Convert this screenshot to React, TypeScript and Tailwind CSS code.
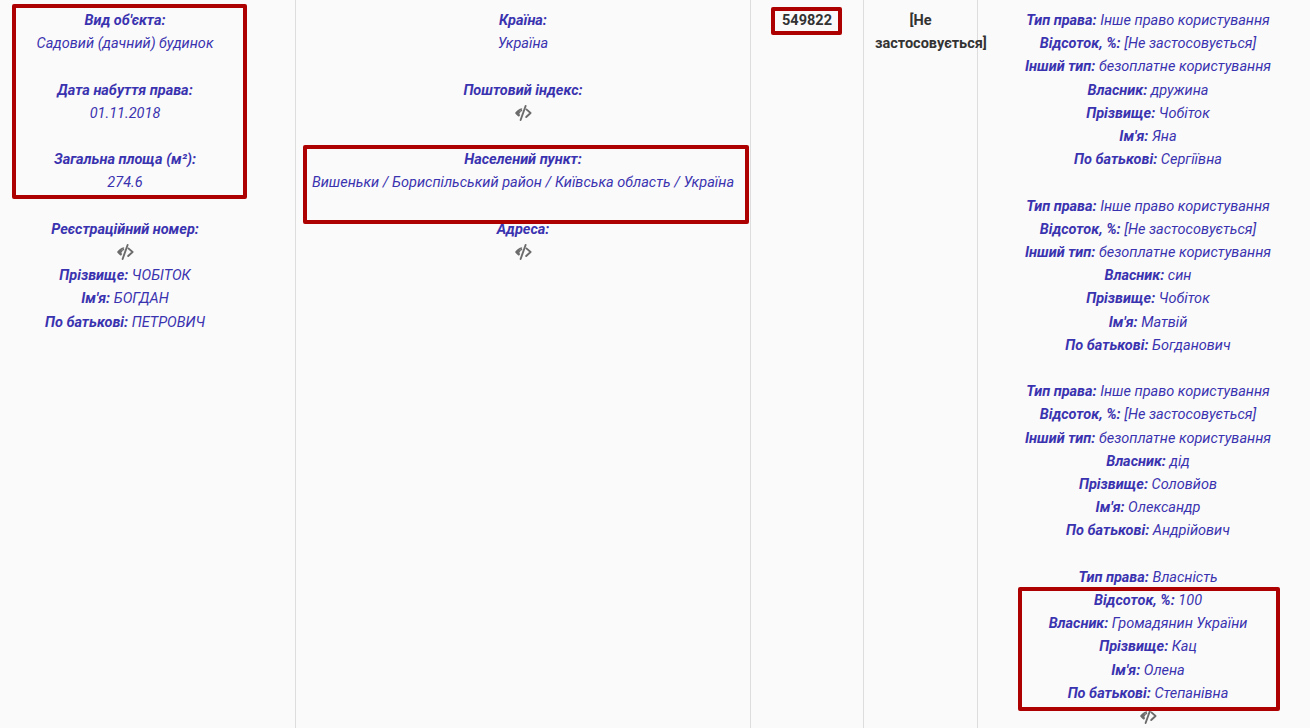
const EyeOff = () => (
  <svg viewBox="0 0 18 16" className="inline-block w-[18px] h-[16px] align-[-3px]" fill="none">
    <path d="M8.2 3.2C5 3.6 2.4 5.8 1 8c.9 1.5 2.3 2.9 4 3.8L6.2 10C5.2 9.2 4.8 8.2 4.9 7.3c.2-1.5 1.8-2.5 3-2.5z" fill="#6b6b6b" />
    <path d="M5.2 8.6c0-1.8 1.2-3 3-3.2" stroke="#6b6b6b" strokeWidth="1.4" />
    <path d="M11.6 1 6.6 15" stroke="#6b6b6b" strokeWidth="1.9" strokeLinecap="round" />
    <path d="M12.4 4.4 16.6 8l-4.4 4" stroke="#6b6b6b" strokeWidth="1.9" strokeLinecap="round" strokeLinejoin="round" />
  </svg>
);

type Line = [string, string?] | "eye" | "gap";

const Lines = ({ items }: { items: Line[] }) => (
  <>
    {items.map((item, i) => {
      if (item === "gap") return <div key={i} className="h-[23.2px]" />;
      if (item === "eye")
        return (
          <div key={i} className="h-[23.2px]">
            <EyeOff />
          </div>
        );
      return (
        <div key={i}>
          <b className="font-bold">{item[0]}</b>
          {item[1] ? " " + item[1] : ""}
        </div>
      );
    })}
  </>
);

const rights = (owner: string, last: string, first: string, middle: string): Line[] => [
  ["Тип права:", "Інше право користування"],
  ["Відсоток, %:", "[Не застосовується]"],
  ["Інший тип:", "безоплатне користування"],
  ["Власник:", owner],
  ["Прізвище:", last],
  ["Ім'я:", first],
  ["По батькові:", middle],
  "gap",
];

const col1: Line[] = [
  ["Вид об'єкта:"],
  ["", "Садовий (дачний) будинок"],
  "gap",
  ["Дата набуття права:"],
  ["", "01.11.2018"],
  "gap",
  ["Загальна площа (м²):"],
  ["", "274.6"],
  "gap",
  ["Реєстраційний номер:"],
  "eye",
  ["Прізвище:", "ЧОБІТОК"],
  ["Ім'я:", "БОГДАН"],
  ["По батькові:", "ПЕТРОВИЧ"],
];

const col2: Line[] = [
  ["Країна:"],
  ["", "Україна"],
  "gap",
  ["Поштовий індекс:"],
  "eye",
  "gap",
  ["Населений пункт:"],
  ["", "Вишеньки / Бориспільський район / Київська область / Україна"],
  "gap",
  ["Адреса:"],
  "eye",
];

const col5: Line[] = [
  ...rights("дружина", "Чобіток", "Яна", "Сергіївна"),
  ...rights("син", "Чобіток", "Матвій", "Богданович"),
  ...rights("дід", "Соловйов", "Олександр", "Андрійович"),
  ["Тип права:", "Власність"],
  ["Відсоток, %:", "100"],
  ["Власник:", "Громадянин України"],
  ["Прізвище:", "Кац"],
  ["Ім'я:", "Олена"],
  ["По батькові:", "Степанівна"],
  "eye",
];

export default function App() {
  return (
    <div className="h-[728px] w-[1310px] overflow-hidden bg-[#fafafa] font-['Roboto',sans-serif] text-[14.5px] leading-[23.2px] text-center">
      <div className="flex h-full">
        <div className="relative w-[296px] shrink-0 border-r border-[#dddddd] pt-[9px] pr-[45px] italic text-[#3a33b0]">
          <Lines items={col1} />
          <div className="absolute left-[12px] top-[4px] h-[195px] w-[235px] rounded-[2px] border-4 border-[#ad0000]" />
        </div>
        <div className="relative w-[455px] shrink-0 border-r border-[#dddddd] pt-[9px] px-[12px] italic text-[#3a33b0]">
          <Lines items={col2} />
          <div className="absolute left-[7px] top-[145px] h-[79px] w-[446px] rounded-[2px] border-4 border-[#ad0000]" />
        </div>
        <div className="relative w-[113px] shrink-0 border-r border-[#dddddd] pt-[9px] font-bold text-[#333333]">
          549822
          <div className="absolute left-[20px] top-[7px] h-[28px] w-[71px] rounded-[2px] border-4 border-[#ad0000]" />
        </div>
        <div className="relative w-[114px] shrink-0 border-r border-[#dddddd] pt-[9px] px-[11px] font-bold text-[#333333]">
          [Не застосовується]
        </div>
        <div className="relative min-w-0 flex-1 pt-[9px] pl-[8px] italic text-[#3a33b0]">
          <Lines items={col5} />
          <div className="absolute left-[40px] top-[587px] h-[124px] w-[262px] rounded-[2px] border-4 border-[#ad0000]" />
        </div>
      </div>
    </div>
  );
}
